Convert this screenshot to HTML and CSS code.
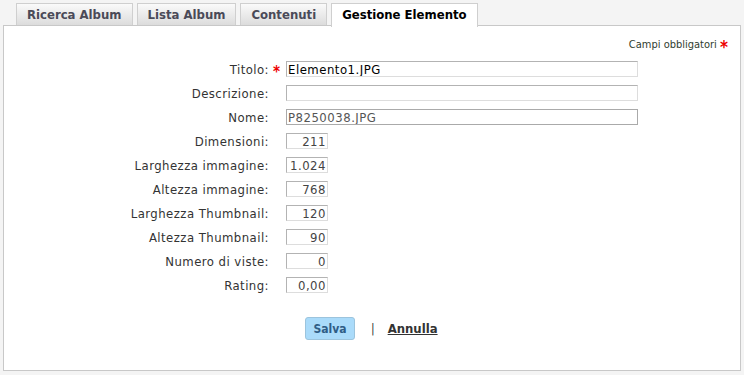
FILE: index.html
```html
<!DOCTYPE html>
<html lang="it">
<head>
    <meta charset="UTF-8">
    <title>Gestione Elemento</title>
    <link rel="stylesheet" href="styles.css">
</head>
<body>
    <div class="tabs">
        <a class="tab">Ricerca Album</a>
        <a class="tab">Lista Album</a>
        <a class="tab">Contenuti</a>
        <a class="tab active">Gestione Elemento</a>
    </div>
    <div class="panel">
        <div class="required-note">Campi obbligatori <span class="star">*</span></div>
        <form class="form">
            <label>Titolo:</label><span class="star">*</span><input class="wide" type="text" value="Elemento1.JPG">
            <label>Descrizione:</label><span></span><input class="wide" type="text" value="">
            <label>Nome:</label><span></span><input class="wide readonly" type="text" value="P8250038.JPG">
            <label>Dimensioni:</label><span></span><input class="num" type="text" value="211">
            <label>Larghezza immagine:</label><span></span><input class="num" type="text" value="1.024">
            <label>Altezza immagine:</label><span></span><input class="num" type="text" value="768">
            <label>Larghezza Thumbnail:</label><span></span><input class="num" type="text" value="120">
            <label>Altezza Thumbnail:</label><span></span><input class="num" type="text" value="90">
            <label>Numero di viste:</label><span></span><input class="num" type="text" value="0">
            <label>Rating:</label><span></span><input class="num" type="text" value="0,00">
        </form>
        <div class="actions">
            <button type="button" class="save">Salva</button>
            <span class="sep">|</span>
            <a class="cancel" href="#">Annulla</a>
        </div>
    </div>
</body>
</html>
```
FILE: styles.css
```css
body {
    margin: 0;
    padding: 3px 3px 0 3px;
    background: #f4f4f4;
    font-family: 'DejaVu Sans', sans-serif;
    font-stretch: condensed;
    font-size: 12px;
    color: #333;
}
.tabs {
    display: flex;
    gap: 4px;
    padding-left: 13px;
    height: 22px;
    position: relative;
    z-index: 1;
}
.tab {
    display: block;
    height: 21px;
    line-height: 21px;
    padding: 0 10px;
    border: 1px solid #cfcfcf;
    border-bottom: none;
    background: linear-gradient(#fafafa, #dcdcdc);
    color: #4a4a58;
    font-weight: bold;
    font-size: 13px;
}
.tab.active {
    background: #fff;
    color: #000;
    height: 23px;
    padding: 0 10px;
}
.panel {
    background: #fff;
    border: 1px solid #c8c8c8;
    height: 346px;
    box-sizing: border-box;
}
.required-note {
    text-align: right;
    font-size: 11px;
    color: #2f3d2f;
    padding: 12px 12px 0 0;
    height: 19px;
}
.star {
    color: #e00;
    font-weight: bold;
    font-size: 15px;
    line-height: 12px;
}
.required-note .star {
    font-size: 17px;
    vertical-align: -5px;
}
.form {
    display: grid;
    grid-template-columns: 265px 17px 1fr;
    grid-auto-rows: 24px;
    align-items: center;
}
.form label {
    text-align: right;
    font-size: 13px;
    letter-spacing: 0.45px;
}
.form .star {
    padding-left: 4px;
    padding-top: 5px;
}
.form input {
    height: 16px;
    box-sizing: border-box;
    border: 1px solid #b3b3b3;
    border-right-color: #ddd;
    border-bottom-color: #ddd;
    font-family: 'DejaVu Sans', sans-serif;
    font-stretch: condensed;
    font-size: 13px;
    letter-spacing: 0.5px;
    padding: 0 1px;
    color: #000;
}
.form input.wide {
    width: 352px;
}
.form input.readonly {
    color: #555;
    border-color: #aaa;
}
.form input.num {
    width: 42px;
    text-align: right;
    color: #444;
}
.actions {
    display: flex;
    align-items: center;
    padding: 20px 0 0 301px;
}
.save {
    width: 50px;
    height: 23px;
    background: #aadbfa;
    border: 1px solid #9cc4dd;
    border-radius: 3px;
    color: #2f5d86;
    font-family: 'DejaVu Sans', sans-serif;
    font-stretch: condensed;
    font-weight: bold;
    font-size: 12px;
    padding: 0;
}
.sep {
    margin: 0 13px 0 16px;
    font-size: 12px;
    color: #333;
}
.cancel {
    color: #333;
    font-weight: bold;
    font-size: 13px;
}
```
